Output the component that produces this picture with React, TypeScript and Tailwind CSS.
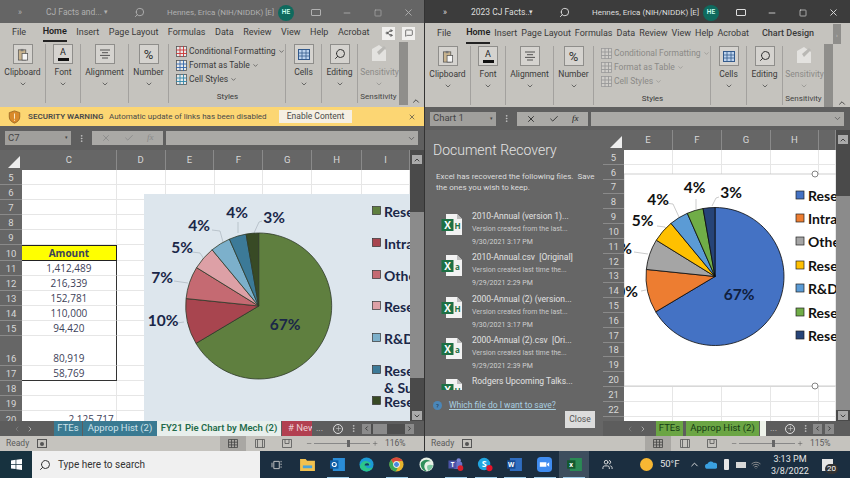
import { ChevronDown, ChevronUp, ChevronLeft, ChevronRight, Search, X, Check, Minus, Plus, Square, Share2, MessageSquare, MoreVertical, Users, Wifi } from "lucide-react";

const leftSlices = [
  { v: 1412489, c: "#5f7f3f" },
  { v: 216339, c: "#a8454f" },
  { v: 152781, c: "#c56a72" },
  { v: 110000, c: "#dda0a6" },
  { v: 94420, c: "#7cb0cb" },
  { v: 80919, c: "#3c7a98" },
  { v: 58769, c: "#384a25" },
];
const rightColors = ["#4472c4", "#ed7d31", "#a5a5a5", "#ffc000", "#5b9bd5", "#70ad47", "#264478"];

function Pie({ cx, cy, r, colors, stroke }: { cx: number; cy: number; r: number; colors: string[]; stroke: string }) {
  const total = leftSlices.reduce((s, x) => s + x.v, 0);
  let a = 0;
  return (
    <g>
      {leftSlices.map((s, i) => {
        const start = a;
        a += (s.v / total) * Math.PI * 2;
        const x0 = cx + r * Math.sin(start);
        const y0 = cy - r * Math.cos(start);
        const x1 = cx + r * Math.sin(a);
        const y1 = cy - r * Math.cos(a);
        const large = a - start > Math.PI ? 1 : 0;
        return (
          <path
            key={i}
            d={`M${cx} ${cy}L${x0} ${y0}A${r} ${r} 0 ${large} 1 ${x1} ${y1}Z`}
            fill={colors[i]}
            stroke={stroke}
            strokeWidth="0.8"
          />
        );
      })}
    </g>
  );
}

function Label({ x, y, t, c, end }: { x: number; y: number; t: string; c: string; end?: boolean }) {
  return (
    <text x={x} y={y} fill={c} fontSize="15.5" fontWeight="700" fontFamily="Lato, sans-serif" textAnchor={end ? "end" : "middle"} dominantBaseline="central">
      {t}
    </text>
  );
}

function LeftChart() {
  const legend: [number, string, string][] = [
    [211, "#5f7f3f", "Research"],
    [243, "#a8454f", "Intramural"],
    [275, "#c56a72", "Other"],
    [306, "#dda0a6", "Research"],
    [338, "#7cb0cb", "R&D Contracts"],
    [370, "#3c7a98", "Research"],
    [401, "#384a25", "Research"],
  ];
  const ink = "#1a2748";
  return (
    <svg viewBox="144 194 267 227" className="absolute left-[144px] top-[24px] h-[227px] w-[267px] bg-[#dde6ed]">
      <g fill="none" stroke="#aab4bd" strokeWidth="0.7">
        <path d="M262 221l-3 1-5 11M238 222v11M212 230l8 1 3 11M192 252l8 1 4 6M174 281l14 2M177 323l7-1" />
      </g>
      <Pie cx={258.7} cy={306} r={73} colors={leftSlices.map((s) => s.c)} stroke="#2f3a2a" />
      <Label x={274} y={217} t="3%" c={ink} />
      <Label x={237} y={212} t="4%" c={ink} />
      <Label x={199} y={225} t="4%" c={ink} />
      <Label x={182} y={247} t="5%" c={ink} />
      <Label x={162} y={277} t="7%" c={ink} />
      <Label x={163} y={320} t="10%" c={ink} />
      <Label x={285} y={324} t="67%" c={ink} />
      {legend.map(([y, c, t]) => (
        <g key={y}>
          <rect x={372.5} y={y - 4.5} width={8} height={8} fill={c} stroke="#333" strokeWidth="0.7" />
          <text x={384} y={y} fontSize="14" fontWeight="700" fontFamily="Lato, sans-serif" fill={ink} dominantBaseline="central">
            {t}
          </text>
        </g>
      ))}
      <text x={384} y={387} fontSize="14" fontWeight="700" fontFamily="Lato, sans-serif" fill={ink} dominantBaseline="central">
        &amp; Support
      </text>
    </svg>
  );
}

function RightChart() {
  const legend: [number, string, string][] = [
    [195, rightColors[0], "Research"],
    [218, rightColors[1], "Intramural"],
    [241, rightColors[2], "Other"],
    [265, rightColors[3], "Research"],
    [288, rightColors[4], "R&D Contracts"],
    [312, rightColors[5], "Research"],
    [335, rightColors[6], "Research"],
  ];
  const ink = "#111";
  return (
    <svg viewBox="624 150 212 271" className="absolute left-0 top-0 h-[271px] w-[212px]">
      <rect x="624" y="174" width="212" height="212" fill="#fff" stroke="#c4c4c4" strokeWidth="0.8" />
      <g fill="none" stroke="#b5b5b5" strokeWidth="0.7">
        <path d="M719 197l-3 1-4 8M696 199v10M665 203l8 1 6 13M657 226l8 1 3 6M634 252l14 2M641 291l5-1" />
      </g>
      <Pie cx={715} cy={276.5} r={69} colors={rightColors} stroke="#0a0a0a" />
      <Label x={731} y={192} t="3%" c={ink} />
      <Label x={694.6} y={187} t="4%" c={ink} />
      <Label x={658} y={199} t="4%" c={ink} />
      <Label x={642.6} y={220} t="5%" c={ink} />
      <Label x={632} y={248} t="7%" c={ink} end />
      <Label x={638} y={291} t="10%" c={ink} end />
      <Label x={739} y={294} t="67%" c="#10203f" />
      {legend.map(([y, c, t]) => (
        <g key={y}>
          <rect x={796} y={y - 4} width={8} height={8} fill={c} stroke="#222" strokeWidth="0.7" />
          <text x={808} y={y} fontSize="14" fontWeight="700" fontFamily="Lato, sans-serif" fill={ink} dominantBaseline="central">
            {t}
          </text>
        </g>
      ))}
      <circle cx="815" cy="174" r="3" fill="#fff" stroke="#777" strokeWidth="0.9" />
      <circle cx="815" cy="386" r="3" fill="#fff" stroke="#777" strokeWidth="0.9" />
    </svg>
  );
}

function TitleBar({ name, active }: { name: string; active?: boolean }) {
  const text = active ? "text-[#dedede]" : "text-[#b0b0b0]";
  return (
    <div className={`flex h-[23px] items-center pt-[2px] text-[8.5px] ${active ? "bg-[#3c3c3c]" : "bg-[#656565]"} ${text}`}>
      <span className="w-[40px] text-center">»</span>
      <span className="ml-[6px] w-[54px] whitespace-nowrap">{name}</span>
      <span className="w-[12px] text-center text-[7px]">▾</span>
      <span className="flex w-[54px] justify-center">
        <Search size={11} className="-scale-x-100" />
      </span>
      <span className="ml-[1px] w-[104px] whitespace-nowrap text-[8px]">Hennes, Erica (NIH/NIDDK) [E]</span>
      <span className="ml-[7px] flex h-[16px] w-[16px] items-center justify-center rounded-full bg-[#0f6a5e] text-[6.5px] font-semibold text-[#cfe]">HE</span>
      <span className="ml-[6px] flex w-[31px] justify-center">
        <span className="h-[7px] w-[10px] rounded-[1px] border border-current" />
      </span>
      <span className="flex w-[31px] justify-center">
        <Minus size={10} />
      </span>
      <span className="flex w-[31px] justify-center">
        <Square size={8} />
      </span>
      <span className="flex w-[30px] justify-center">
        <X size={11} />
      </span>
    </div>
  );
}

function BigButton({ children }: { children: React.ReactNode }) {
  return <div className="flex h-[20px] w-[20px] items-center justify-center border border-[#8f8e8b] bg-[#d5d3cf]">{children}</div>;
}

function Group({ w, label, icon }: { w: string; label: string; icon: React.ReactNode }) {
  return (
    <div className={`flex h-[59px] flex-col items-center border-r border-[#a3a19e] ${w}`}>
      <BigButton>{icon}</BigButton>
      <span className="mt-[1px] text-[8.5px] leading-[14px]">{label}</span>
      <ChevronDown size={8} className="mt-[1px]" />
    </div>
  );
}

function StyleRow({ label, color, dim }: { label: string; color: string; dim?: boolean }) {
  return (
    <div className={`flex h-[15px] items-center gap-[2px] text-[8.5px] whitespace-nowrap ${dim ? "text-[#8b8a87]" : ""}`}>
      <svg viewBox="0 0 11 11" className="h-[11px] w-[11px] shrink-0">
        <rect x="0.5" y="0.5" width="10" height="10" fill={dim ? "#cfcdc9" : "#e8e8e8"} stroke={dim ? "#999" : "#555"} strokeWidth="0.8" />
        <path d="M0 4h11M0 7.5h11M4 0v11M7.5 0v11" stroke={dim ? "#999" : color} strokeWidth="0.9" />
      </svg>
      <span>{label}</span>
      <ChevronDown size={7} />
    </div>
  );
}

function Ribbon({ active }: { active?: boolean }) {
  const tabs = ["Insert", "Page Layout", "Formulas", "Data", "Review", "View", "Help", "Acrobat"];
  return (
    <div className="flex h-[84px] flex-col bg-[#c5c3be] text-[#3a3a3a]">
      <div className={`flex h-[21px] items-center pl-[12px] pt-[1px] text-[9px] ${active ? "gap-[4px]" : "gap-[9.5px]"}`}>
        <span>File</span>
        <span className={`flex h-full items-center border-b-2 border-[#222] font-semibold text-[#222] ${active ? "ml-[11px]" : "ml-[7px]"}`}>Home</span>
        {tabs.map((t) => (
          <span key={t} className="whitespace-nowrap">
            {t}
          </span>
        ))}
        {active ? (
          <>
            <span className="ml-[9px] whitespace-nowrap font-medium">Chart Design</span>
            <span className="ml-auto mr-[9px] flex h-[20px] w-[8px] items-center justify-center bg-[#8f8e8b] text-[6px] text-[#ccc]">›</span>
          </>
        ) : (
          <span className="ml-auto mr-[9px] flex gap-[7px]">
            <span className="flex h-[13px] w-[13px] items-center justify-center bg-[#f1f0ee]">
              <Share2 size={8} />
            </span>
            <span className="flex h-[13px] w-[13px] items-center justify-center bg-[#f1f0ee]">
              <MessageSquare size={8} />
            </span>
          </span>
        )}
      </div>
      <div className="flex flex-1 pt-[2px]">
        <Group
          w="w-[46px]"
          label="Clipboard"
          icon={
            <svg viewBox="0 0 12 14" className="h-[13px] w-[12px]">
              <rect x="1" y="2" width="8" height="11" fill="#c9b48f" stroke="#555" strokeWidth="0.8" />
              <rect x="5" y="6" width="6" height="7" fill="#f5f5f5" stroke="#555" strokeWidth="0.8" />
              <rect x="3.5" y="1" width="3" height="2.5" fill="#777" />
            </svg>
          }
        />
        <Group
          w="w-[35px]"
          label="Font"
          icon={
            <span className="flex flex-col items-center text-[9px] leading-[9px] text-[#222]">
              A<span className="mt-[1px] h-[3px] w-[11px] bg-[#111]" />
            </span>
          }
        />
        <Group
          w="w-[48px]"
          label="Alignment"
          icon={
            <svg viewBox="0 0 12 10" className="h-[10px] w-[12px]">
              <path d="M1 1h10M3 3.7h6M1 6.4h10M3 9h6" stroke="#444" strokeWidth="0.9" />
            </svg>
          }
        />
        <Group w="w-[40px]" label="Number" icon={<span className="text-[13px] leading-none text-[#333]">%</span>} />
        <div className="flex h-[59px] w-[117px] flex-col border-r border-[#a3a19e] pl-[7px]">
          <StyleRow label="Conditional Formatting" color="#c33" dim={active} />
          <StyleRow label="Format as Table" color="#36a" dim={active} />
          <StyleRow label="Cell Styles" color="#38a" dim={active} />
          <span className="mt-[4px] -translate-x-[3px] text-center text-[8px] leading-[12px]">Styles</span>
        </div>
        <Group
          w="w-[36px]"
          label="Cells"
          icon={
            <svg viewBox="0 0 12 11" className="h-[11px] w-[12px]">
              <rect x="0.5" y="0.5" width="11" height="10" fill="#bcd3ee" stroke="#335a8c" />
              <path d="M0 4h12M0 7h12M4 0v11M8 0v11" stroke="#335a8c" strokeWidth="0.8" />
            </svg>
          }
        />
        <Group w="w-[36px]" label="Editing" icon={<Search size={12} className="-scale-x-100 text-[#333]" />} />
        <div className="flex h-[59px] w-[41px] flex-col items-center text-[#8b8a87]">
          <svg viewBox="0 0 16 18" className="h-[18px] w-[16px]">
            <path d="M1 5l7-4 7 5v11H1z" fill="#e3e2df" />
            <path d="M6 8l7-6 2 2-7 7z" fill="#b9b8b4" />
          </svg>
          <span className="mt-[3px] pl-[2px] text-[8.5px] leading-[14px] whitespace-nowrap">Sensitivity</span>
          <ChevronDown size={8} className="mt-[1px]" />
          <span className="mt-[3px] text-[8px] leading-[12px] whitespace-nowrap text-[#444]">Sensitivity</span>
        </div>
        <div className="h-[63px] w-[9px] -translate-y-[2px] bg-[#8f8e8b]" />
        <div className="flex flex-1 items-end justify-center pb-[1px] text-[#333]">
          <ChevronUp size={10} />
        </div>
      </div>
    </div>
  );
}

function FormulaBar({ name, active }: { name: string; active?: boolean }) {
  return (
    <div className={`flex items-center bg-[#5f5f5f] px-[5px] ${active ? "h-[23px]" : "h-[24px]"}`}>
      <div className="flex h-[14px] w-[66px] items-center justify-between bg-[#a09f9c] px-[3px] text-[9.5px] text-[#444]">
        {name}
        <span className="text-[5px]">▾</span>
      </div>
      <span className="flex w-[21px] justify-center text-[#ccc]">
        <MoreVertical size={9} />
      </span>
      <div className={`flex h-[14px] w-[71px] items-center justify-around bg-[#aaa9a6] px-[3px] ${active ? "text-[#222]" : "text-[#888]"}`}>
        <X size={10} />
        <Check size={10} />
        <span className="font-['Liberation_Serif',serif] text-[9px] italic">fx</span>
      </div>
      <div className="ml-[3px] mr-[1px] flex h-[14px] flex-1 items-center justify-end bg-[#aaa9a6] pr-[2px] text-[#555]">
        <ChevronDown size={9} />
      </div>
    </div>
  );
}

function HeaderCell({ label, w }: { label: string; w: string }) {
  return <div className={`flex h-full items-center justify-center border-r border-[#8a8a8a] text-[9.5px] text-[#d8d8d8] ${w}`}>{label}</div>;
}

function Corner({ w }: { w: string }) {
  return (
    <div className={`flex h-full items-end justify-end p-[2px] ${w}`}>
      <svg viewBox="0 0 12 12" className="h-[12px] w-[12px]">
        <path d="M0 12L12 0v12z" fill="#eee" />
      </svg>
    </div>
  );
}

function RowHead({ n, h, w }: { n: number; h: string; w: string }) {
  return (
    <div className={`flex shrink-0 items-end justify-center border-b border-[#8a8a8a] bg-[#666] text-[9.5px] leading-[13px] text-[#d8d8d8] ${h} ${w}`}>{n}</div>
  );
}

function ScrollBar({ mid, top }: { mid: string; top: string }) {
  return (
    <div className="flex w-[14px] shrink-0 flex-col items-center bg-[#4a4a4a]">
      <div className="mt-[5px] flex h-[9px] w-[10px] items-center justify-center bg-[#aaa] text-[#444]">
        <ChevronUp size={8} strokeWidth={3} />
      </div>
      <div className={`w-full ${top}`} />
      <div className={`w-full bg-[#8b8b8b] ${mid}`} />
      <div className="flex-1" />
      <div className="mb-[1px] flex h-[9px] w-[10px] items-center justify-center bg-[#aaa] text-[#444]">
        <ChevronDown size={8} strokeWidth={3} />
      </div>
    </div>
  );
}

function LeftSheet() {
  const cols = [
    { l: "C", w: "w-[95px]" },
    { l: "D", w: "w-[49px]" },
    { l: "E", w: "w-[49px]" },
    { l: "F", w: "w-[49px]" },
    { l: "G", w: "w-[49px]" },
    { l: "H", w: "w-[50px]" },
    { l: "I", w: "w-[48px]" },
  ];
  const rows = [
    { n: 5, h: "h-[15px]" },
    { n: 6, h: "h-[15px]" },
    { n: 7, h: "h-[15px]" },
    { n: 8, h: "h-[15px]" },
    { n: 9, h: "h-[15px]" },
    { n: 10, h: "h-[16px]", head: true, t: "Amount" },
    { n: 11, h: "h-[15px]", box: true, t: "1,412,489" },
    { n: 12, h: "h-[15px]", box: true, t: "216,339" },
    { n: 13, h: "h-[15px]", box: true, t: "152,781" },
    { n: 14, h: "h-[15px]", box: true, t: "110,000" },
    { n: 15, h: "h-[15px]", box: true, t: "94,420" },
    { n: 16, h: "h-[30px]", box: true, t: "80,919" },
    { n: 17, h: "h-[15px]", box: true, last: true, t: "58,769" },
    { n: 18, h: "h-[15px]" },
    { n: 19, h: "h-[15px]" },
    { n: 20, h: "h-[16px]", total: true, t: "2,125,717" },
  ];
  return (
    <div className="flex h-[271px] bg-[#666]">
      <div className="flex min-w-0 flex-1 flex-col">
        <div className="flex h-[20px] shrink-0">
          <Corner w="w-[22px]" />
          {cols.map((c) => (
            <HeaderCell key={c.l} label={c.l} w={c.w} />
          ))}
        </div>
        <div className="relative flex-1 overflow-hidden">
          {rows.map((r) => (
            <div key={r.n} className="flex">
              <RowHead n={r.n} h={r.h} w="w-[22px]" />
              {cols.map((c, i) => (
                <div
                  key={c.l}
                  className={`flex items-end border-b border-r font-['Open_Sans',sans-serif] text-[10px] leading-[13px] text-[#3c4158] ${r.h} ${c.w} ${r.total && i === 0 ? "justify-end pr-[2px]" : "justify-center"} ${
                    i === 0 && r.head ? "border-[#222] border-t bg-[#ffff00] font-bold text-[#3a3a10]" : "border-[#e6e6e6] bg-white"
                  } ${i === 0 && r.box ? "border-r-[#333]" : ""} ${i === 0 && r.last ? "border-b-[#333]" : ""}`}
                >
                  {i === 0 ? r.t : ""}
                </div>
              ))}
            </div>
          ))}
          <LeftChart />
        </div>
      </div>
      <ScrollBar top="h-[48px]" mid="h-[166px]" />
    </div>
  );
}

function RightSheet() {
  const cols = [
    { l: "E", w: "w-[49px]" },
    { l: "F", w: "w-[49px]" },
    { l: "G", w: "w-[49px]" },
    { l: "H", w: "w-[48px]" },
    { l: "", w: "w-[17px]" },
  ];
  const rows = [5, 6, 7, 8, 9, 10, 11, 12, 13, 14, 15, 16, 17, 18, 19, 20, 21, 22, 23];
  return (
    <div className="flex h-[291px] bg-[#666]">
      <div className="flex min-w-0 flex-1 flex-col">
        <div className="flex h-[20px] shrink-0">
          <Corner w="w-[21px]" />
          {cols.map((c) => (
            <HeaderCell key={c.l} label={c.l} w={c.w} />
          ))}
        </div>
        <div className="flex h-[271px] overflow-hidden">
          <div className="w-[21px] shrink-0">
            {rows.map((n) =>
              n === 23 ? (
                <div key={n} className="h-[14.82px]" />
              ) : (
                <RowHead key={n} n={n} h="h-[14.82px]" w="w-[21px]" />
              ),
            )}
          </div>
          <div className="relative w-[212px] bg-white">
            {rows.map((n) => (
              <div key={n} className="flex h-[14.82px]">
                {cols.map((c) => (
                  <div key={c.l} className={`border-b border-r border-[#e6e6e6] ${c.w}`} />
                ))}
              </div>
            ))}
            <RightChart />
          </div>
        </div>
      </div>
      <ScrollBar top="h-[52px]" mid="h-[214px]" />
    </div>
  );
}

function SheetTab({ label, className }: { label: string; className: string }) {
  return <div className={`flex h-full items-center justify-center overflow-hidden whitespace-nowrap text-[9.5px] ${className}`}>{label}</div>;
}

function LeftTabs() {
  return (
    <div className="flex h-[15px] items-center bg-[#5d5d5d] text-[#ccc]">
      <div className="flex w-[54px] justify-center gap-[5px] pr-[8px]">
        <ChevronLeft size={8} className="text-[#888]" />
        <ChevronRight size={8} />
      </div>
      <SheetTab label="FTEs" className="w-[28px] bg-[#3a7a92] text-[#cfe3ea]" />
      <SheetTab label="Approp Hist (2)" className="ml-[1px] w-[74px] bg-[#3a7a92] text-[#cfe3ea]" />
      <SheetTab label="FY21 Pie Chart by Mech (2)" className="w-[124px] bg-[#e8efec] font-semibold text-[#1f6b4a]" />
      <SheetTab label="# New" className="ml-[1px] w-[30px] justify-start pl-[6px] bg-[#b23f50] text-[#eccdd2]" />
      <span className="ml-[4px] w-[12px] text-[9px]">...</span>
      <span className="ml-[5px] flex h-[10px] w-[10px] items-center justify-center rounded-full border border-[#ddd]">
        <Plus size={7} />
      </span>
      <span className="ml-[4px] flex w-[12px] justify-center">
        <MoreVertical size={9} />
      </span>
      <div className="ml-[3px] flex h-[10px] w-[52px] items-center justify-between bg-[#4e4e4e]">
        <span className="flex h-full w-[9px] items-center justify-center bg-[#8b8b8b] text-[#333]">
          <ChevronLeft size={7} strokeWidth={3} />
        </span>
        <span className="h-full w-[14px] bg-[#8b8b8b]" />
        <span className="ml-[4px] h-full w-[9px]" />
        <span className="flex h-full w-[9px] items-center justify-center bg-[#8b8b8b] text-[#333]">
          <ChevronRight size={7} strokeWidth={3} />
        </span>
      </div>
    </div>
  );
}

function RightTabs() {
  return (
    <div className="flex h-[15px] items-center bg-[#5d5d5d] text-[#ccc]">
      <div className="flex w-[53px] justify-center gap-[5px] pl-[14px]">
        <ChevronLeft size={8} className="text-[#888]" />
        <ChevronRight size={8} />
      </div>
      <SheetTab label="FTEs" className="w-[27px] bg-[#6ba544] text-[#143a14]" />
      <SheetTab label="Approp Hist (2)" className="ml-[3px] w-[73px] bg-[#6ba544] text-[#143a14]" />
      <div className="ml-[1px] h-full w-[6px] bg-[#eef3ea]" />
      <span className="ml-[4px] w-[12px] text-[9px]">...</span>
      <span className="ml-[3px] flex h-[10px] w-[10px] items-center justify-center rounded-full border border-[#ddd]">
        <Plus size={7} />
      </span>
      <span className="ml-[4px] flex w-[12px] justify-center">
        <MoreVertical size={9} />
      </span>
      <div className="ml-[2px] flex h-[10px] gap-[3px]">
        <span className="flex h-full w-[9px] items-center justify-center bg-[#8b8b8b] text-[#333]">
          <ChevronLeft size={7} strokeWidth={3} />
        </span>
        <span className="flex h-full w-[9px] items-center justify-center bg-[#8b8b8b] text-[#333]">
          <ChevronRight size={7} strokeWidth={3} />
        </span>
      </div>
    </div>
  );
}

function StatusBar({ zoom, gap }: { zoom: string; gap: string }) {
  return (
    <div className="flex h-[15px] items-center bg-[#c5c3be] pl-[6px] text-[8.5px] text-[#5a5a5a]">
      <span className="w-[31px]">Ready</span>
      <span className="flex h-[9px] w-[10px] items-center justify-center border border-[#555]">
        <span className="h-[4px] w-[4px] rounded-full bg-[#555]" />
      </span>
      <span className={gap} />
      <span className="flex h-full w-[26px] items-center justify-center bg-[#a9a7a3]">
        <svg viewBox="0 0 10 9" className="h-[9px] w-[10px]">
          <path d="M.5.5h9v8h-9zM.5 3.2h9M.5 5.9h9M3.5.5v8M6.5.5v8" fill="none" stroke="#444" strokeWidth="0.8" />
        </svg>
      </span>
      <span className="flex w-[27px] justify-center">
        <svg viewBox="0 0 10 9" className="h-[9px] w-[10px]">
          <path d="M.5.5h9v8h-9zM2.5.5v8M7.5.5v8" fill="none" stroke="#555" strokeWidth="0.8" />
        </svg>
      </span>
      <span className="flex w-[27px] justify-center">
        <svg viewBox="0 0 10 9" className="h-[9px] w-[10px]">
          <path d="M.5.5h9v8h-9zM3 .5v4h4v-4" fill="none" stroke="#555" strokeWidth="0.8" />
        </svg>
      </span>
      <span className="ml-[6px] flex w-[72px] items-center gap-[2px]">
        <Minus size={7} />
        <span className="relative h-[1px] w-[62px] bg-[#888]">
          <span className="absolute left-[33px] -top-[3px] h-[7px] w-[3px] bg-[#666]" />
        </span>
        <Plus size={7} />
      </span>
      <span className="ml-[7px]">{zoom}</span>
    </div>
  );
}

function FileIcon({ kind }: { kind: "H" | "a" }) {
  return (
    <svg viewBox="0 0 22 23" className="mt-[3px] h-[23px] w-[22px] shrink-0">
      <path d="M5 1h11l5 5v16H5z" fill="#f2f2f2" />
      <path d="M16 1v5h5z" fill="#bdbdbd" />
      <rect x="0.5" y="6" width="12" height="12" fill="#1d7044" />
      <text x="6.5" y="15.5" fontSize="10" fontWeight="700" textAnchor="middle" fill="#fff" fontFamily="Open Sans, sans-serif">
        X
      </text>
      <text x="16.5" y="15.5" fontSize="8" fontWeight="700" textAnchor="middle" fill="#1d7044" fontFamily="Open Sans, sans-serif">
        {kind}
      </text>
    </svg>
  );
}

function RecoveryPane() {
  const items: { t: string; s: string; d: string; k: "H" | "a" }[] = [
    { t: "2010-Annual (version 1)...", s: "Version created from the last...", d: "9/30/2021 3:17 PM", k: "H" },
    { t: "2010-Annual.csv  [Original]", s: "Version created last time the...", d: "9/29/2021 2:29 PM", k: "a" },
    { t: "2000-Annual (2) (version...", s: "Version created from the last...", d: "9/30/2021 3:17 PM", k: "H" },
    { t: "2000-Annual (2).csv  [Ori...", s: "Version created last time the...", d: "9/29/2021 2:39 PM", k: "a" },
    { t: "Rodgers Upcoming Talks...", s: "Version created from the last...", d: "9/30/2021 3:17 PM", k: "H" },
  ];
  return (
    <div className="flex w-[178px] shrink-0 flex-col bg-[#666] text-[#ddd]">
      <h2 className="ml-[8px] mt-[10px] text-[14px] font-light leading-[20px] text-[#e4e4e4]">Document Recovery</h2>
      <p className="ml-[11px] mt-[12px] whitespace-pre text-[8px] leading-[10.5px]">{"Excel has recovered the following files.  Save\nthe ones you wish to keep."}</p>
      <div className="mt-[17px] h-[180px] overflow-hidden pl-[16px]">
        {items.map((it) => (
          <div key={it.t} className="flex h-[41.3px] gap-[9px]">
            <FileIcon kind={it.k} />
            <div className="flex flex-col whitespace-pre">
              <span className="text-[8.5px] leading-[13px] text-[#e2e2e2]">{it.t}</span>
              <span className="text-[7px] leading-[13px] text-[#c8c8c8]">{it.s}</span>
              <span className="text-[7px] leading-[12px] text-[#d0d0d0]">{it.d}</span>
            </div>
          </div>
        ))}
      </div>
      <div className="ml-[8px] mt-[9px] flex items-center gap-[7px]">
        <span className="flex h-[9px] w-[9px] items-center justify-center rounded-full bg-[#4a86b8] text-[6px] text-[#234]">?</span>
        <span className="text-[8.5px] leading-[12px] text-[#a9cfe0] underline">Which file do I want to save?</span>
      </div>
      <div className="mr-[8px] flex justify-end">
        <button className="flex h-[17px] w-[30px] items-center justify-center bg-[#dcdcdc] text-[8.5px] text-[#555]">Close</button>
      </div>
    </div>
  );
}

function Warning() {
  return (
    <div className="flex h-[19px] items-center bg-[#fcd673] pl-[8px] pr-[8px] text-[8px] text-[#4a4a4a]">
      <svg viewBox="0 0 14 16" className="h-[14px] w-[13px]">
        <path d="M7 1l6 2v5c0 3.5-3 6-6 7-3-1-6-3.5-6-7V3z" fill="#d98a2b" stroke="#8a5a1c" strokeWidth="0.8" />
        <path d="M7 4v6M7 11.2v1.2" stroke="#fbe9c8" strokeWidth="1.2" />
      </svg>
      <span className="ml-[7px] w-[81px] whitespace-nowrap font-semibold">SECURITY WARNING</span>
      <span className="w-[170px] whitespace-nowrap">Automatic update of links has been disabled</span>
      <button className="flex h-[13px] w-[73px] items-center justify-center bg-[#f5efe2] text-[8.5px]">Enable Content</button>
      <X size={8} className="ml-auto text-[#444]" />
    </div>
  );
}

function AppIcon({ on, hi, children }: { on?: boolean; hi?: boolean; children: React.ReactNode }) {
  return (
    <div className={`relative flex h-full w-[29.6px] items-center justify-center ${hi ? "bg-[#3d4e5e]" : ""}`}>
      {children}
      {on && <span className="absolute bottom-0 left-[4px] h-[1.5px] w-[22px] bg-[#9ecbe8]" />}
    </div>
  );
}

function Taskbar() {
  return (
    <div className="flex h-[27px] items-center bg-[#1b2e40] text-[#e6e6e6]">
      <div className="flex h-full w-[32px] items-center justify-center bg-[#17323f]">
        <svg viewBox="0 0 12 12" className="h-[11px] w-[11px]">
          <path d="M0 1.6l5-.7v4.6H0zM5.8.8L12 0v5.5H5.8zM0 6.3h5V11l-5-.7zM5.8 6.3H12V12l-6.2-.9z" fill="#fff" />
        </svg>
      </div>
      <div className="flex h-full w-[228px] items-center bg-[#f0f0f0] pl-[7px] text-[#333]">
        <Search size={12} className="-scale-x-100" />
        <span className="ml-[7px] text-[10px]">Type here to search</span>
      </div>
      <div className="flex w-[33px] justify-center">
        <svg viewBox="0 0 12 11" className="h-[10px] w-[12px]">
          <path d="M2.5 1.5h6v8h-6zM0.5 3v5M10.5 1v1.5M10.5 4v1.5M10.5 7v1.5" fill="none" stroke="#ccc" />
        </svg>
      </div>
      <AppIcon>
        <svg viewBox="0 0 16 14" className="h-[13px] w-[15px]">
          <path d="M0 1h6l1.5 2H16v11H0z" fill="#f2c14e" />
          <path d="M3 8h10v3H3z" fill="#4aa3d8" />
        </svg>
      </AppIcon>
      <AppIcon on>
        <svg viewBox="0 0 16 14" className="h-[13px] w-[15px]">
          <rect x="3" y="0" width="13" height="14" fill="#2a8dd8" />
          <rect x="0" y="2.5" width="9" height="9" fill="#0f5fa8" />
          <circle cx="4.5" cy="7" r="2.2" fill="none" stroke="#fff" strokeWidth="1.2" />
        </svg>
      </AppIcon>
      <AppIcon>
        <svg viewBox="0 0 16 16" className="h-[15px] w-[15px]">
          <circle cx="8" cy="8" r="7.5" fill="#1c9ad6" />
          <path d="M1 10c1-5 5-7 9-5 3 1 3 4 1 4H7c0 3 4 4 8 2-2 4-6 5-9 4-3-1-5-3-5-5z" fill="#2bc58a" />
          <path d="M6 9c0-2 2-3 4-2 1 .5 1 2 0 2z" fill="#123a66" />
        </svg>
      </AppIcon>
      <AppIcon on>
        <svg viewBox="0 0 16 16" className="h-[15px] w-[15px]">
          <circle cx="8" cy="8" r="7.5" fill="#e8b52e" />
          <path d="M8 .5a7.5 7.5 0 016.5 3.8H8a3.7 3.7 0 00-3.4 2.3L2.2 3A7.5 7.5 0 018 .5z" fill="#d9483b" />
          <path d="M2.2 3l3.2 5.6a3.7 3.7 0 003.8 3l-2 3.8A7.5 7.5 0 012.2 3z" fill="#3aa757" />
          <circle cx="8" cy="8" r="3.2" fill="#4a89dc" stroke="#fff" />
        </svg>
      </AppIcon>
      <AppIcon>
        <svg viewBox="0 0 16 16" className="h-[15px] w-[15px]">
          <circle cx="8" cy="8" r="7.5" fill="#e9f1e6" />
          <path d="M2 6c3-4 8-4 11-1-3-1-6 0-7 3-1 2 0 5 2 7-4 0-7-5-6-9z" fill="#2f8f5a" />
          <path d="M9 9c2-1 4-1 6 0-1 3-3 5-5 6-1-2-2-4-1-6z" fill="#7cc8a0" />
        </svg>
      </AppIcon>
      <AppIcon on>
        <svg viewBox="0 0 18 16" className="h-[15px] w-[16px]">
          <circle cx="12" cy="3.5" r="2.5" fill="#7b83d4" />
          <rect x="6" y="5" width="10" height="8" rx="2" fill="#6a72c6" />
          <rect x="0.5" y="3.5" width="9" height="9" fill="#4b53a8" />
          <text x="5" y="10.8" fontSize="7" fontWeight="700" textAnchor="middle" fill="#fff" fontFamily="Open Sans, sans-serif">T</text>
          <circle cx="14" cy="12" r="3.2" fill="#d81e2c" />
        </svg>
      </AppIcon>
      <AppIcon on>
        <svg viewBox="0 0 18 16" className="h-[15px] w-[16px]">
          <circle cx="8" cy="7.5" r="7" fill="#21a5e0" />
          <text x="8" y="11.3" fontSize="10" fontWeight="700" textAnchor="middle" fill="#fff" fontFamily="Open Sans, sans-serif">S</text>
          <circle cx="14" cy="12" r="3.5" fill="#e4122a" />
        </svg>
      </AppIcon>
      <AppIcon on>
        <svg viewBox="0 0 16 14" className="h-[13px] w-[15px]">
          <rect x="3" y="0" width="13" height="14" fill="#2f6dc0" />
          <rect x="0" y="2.5" width="9" height="9" fill="#174c94" />
          <text x="4.5" y="9.6" fontSize="7" fontWeight="700" textAnchor="middle" fill="#fff" fontFamily="Open Sans, sans-serif">W</text>
        </svg>
      </AppIcon>
      <AppIcon on>
        <svg viewBox="0 0 16 16" className="h-[15px] w-[15px]">
          <rect x="0" y="0" width="16" height="16" rx="4" fill="#3f8cf0" />
          <path d="M3 5.5h7v5H3zM10.7 7.5L13 5.7v4.6l-2.3-1.8z" fill="#fff" />
        </svg>
      </AppIcon>
      <AppIcon on hi>
        <svg viewBox="0 0 16 14" className="h-[13px] w-[15px]">
          <rect x="3" y="0" width="13" height="14" fill="#2a8a55" />
          <rect x="0" y="2.5" width="9" height="9" fill="#14592f" />
          <text x="4.5" y="9.6" fontSize="7" fontWeight="700" textAnchor="middle" fill="#fff" fontFamily="Open Sans, sans-serif">x</text>
        </svg>
      </AppIcon>
      <div className="flex w-[38px] justify-center">
        <Users size={11} />
      </div>
      <span className="ml-[13px] h-[13px] w-[13px] rounded-full bg-[#f7b733]" />
      <span className="ml-[7px] w-[26px] text-[9.5px]">50°F</span>
      <ChevronUp size={11} className="ml-[3px]" />
      <svg viewBox="0 0 14 9" className="ml-[5px] h-[8px] w-[12px]">
        <path d="M3 9a3 3 0 010-6 4 4 0 017-1 3.5 3.5 0 012 7z" fill="#3aa0e0" />
      </svg>
      <span className="ml-[7px] h-[11px] w-[5px] rounded-[1px] bg-[#e6e6e6]" />
      <span className="ml-[7px] h-[6px] w-[10px] bg-[#d8d8d8]" />
      <Wifi size={10} className="ml-[5px] text-[#999]" />
      <div className="ml-[8px] flex w-[42px] flex-col items-center text-[9px] leading-[12px] whitespace-nowrap">
        <span>3:13 PM</span>
        <span>3/8/2022</span>
      </div>
      <div className="relative ml-[11px] h-[12px] w-[11px] bg-[#e6e6e6]">
        <span className="absolute -bottom-[3px] left-[3px] flex h-[10px] w-[13px] items-center justify-center rounded-full bg-[#333] text-[8px] text-white">20</span>
      </div>
    </div>
  );
}

export default function App() {
  return (
    <div className="flex h-[478px] w-[850px] flex-col overflow-hidden bg-[#555] font-['Roboto',sans-serif]">
      <div className="flex h-[451px]">
        <div className="flex w-[425px] flex-col border-r border-[#333]">
          <TitleBar name="CJ Facts and..." />
          <Ribbon />
          <Warning />
          <FormulaBar name="C7" />
          <LeftSheet />
          <LeftTabs />
          <StatusBar zoom="116%" gap="w-[173px]" />
        </div>
        <div className="flex w-[425px] flex-col">
          <TitleBar name="2023 CJ Facts..." active />
          <Ribbon active />
          <FormulaBar name="Chart 1" active />
          <div className="flex h-[306px]">
            <RecoveryPane />
            <div className="flex min-w-0 flex-1 flex-col">
              <RightSheet />
              <RightTabs />
            </div>
          </div>
          <StatusBar zoom="115%" gap="w-[173px]" />
        </div>
      </div>
      <Taskbar />
    </div>
  );
}
